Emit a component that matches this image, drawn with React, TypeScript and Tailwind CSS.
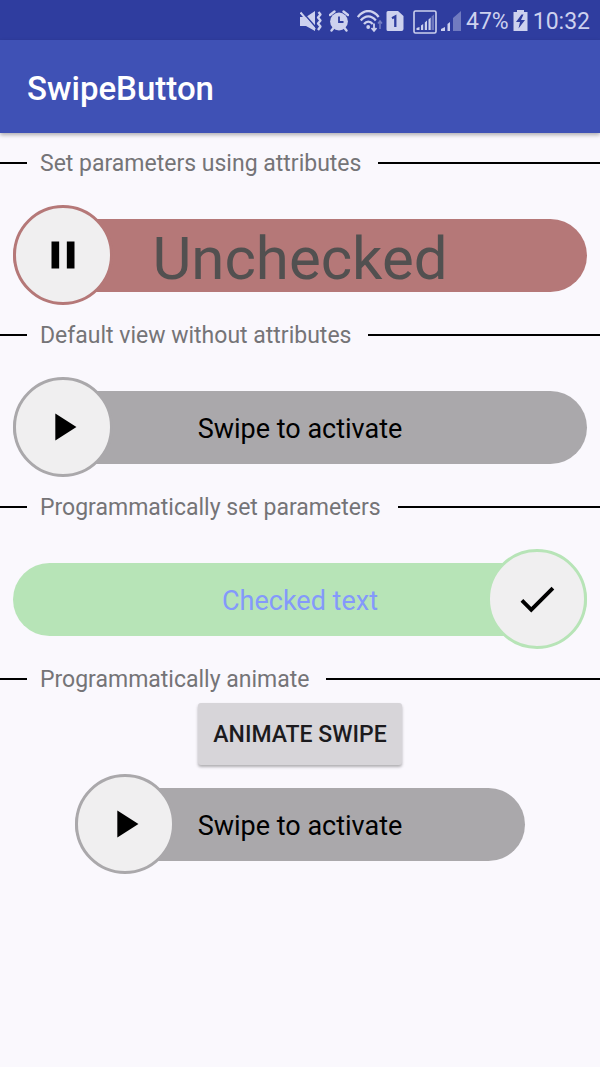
import { useState, type ReactNode } from "react";

const PAUSE = "M6 19h4V5H6v14zm8-14v14h4V5h-4z";
const PLAY = "M8 5v14l11-7z";
const CHECK = "M9 16.17 4.83 12l-1.42 1.41L9 19 21 7l-1.41-1.41z";

function StatusIcons() {
  return (
    <div className="flex items-center" aria-hidden="true">
      <svg className="mr-[7px] h-6 w-[22px]" viewBox="0 0 22 24" fill="#cdd1ee">
        <path d="M0 7h6l9-6v20l-9-5H0z" />
        <path d="M2 1.500l14 16" stroke="#2f3d9f" strokeWidth="1.500" />
        <path d="M.5 2.500l14.500 17" stroke="#cdd1ee" strokeWidth="2" />
        <path d="M18.500 2l2 2.500-2.500 3 2.500 3-2.500 3 2.500 3-2.500 3.500" fill="none" stroke="#cdd1ee" strokeWidth="2.300" strokeLinejoin="round" />
      </svg>
      <svg className="mr-2 h-6 w-5" viewBox="0 0 20 24" fill="#cdd1ee">
        <circle cx="10" cy="11.500" r="8.900" />
        <path d="M1 5 5.500 1.500M19 5 14.500 1.500M4.500 18l-2 2.500M15.500 18l2 2.500" stroke="#cdd1ee" strokeWidth="2.400" fill="none" strokeLinecap="round" />
        <path d="M10 6.500v5.500h4.500" fill="none" stroke="#2f3d9f" strokeWidth="1.800" />
      </svg>
      <svg className="mr-[3px] h-6 w-[26px]" viewBox="0 0 26 24" fill="none" stroke="#cdd1ee">
        <path d="M.800 7C7-1 15.500-1 21.700 7M3.800 10.500c4.500-5.500 10.500-5.500 15 0M7 14c2.700-3.300 6-3.300 8.700 0" strokeWidth="2.300" />
        <circle cx="11.200" cy="17" r="1.900" fill="#cdd1ee" stroke="none" />
        <path d="M17 13.500v7M14.500 18l2.500 2.800 2.500-2.800" strokeWidth="1.800" />
        <path d="M23 19v-8M21 13.500l2-2.500 2 2.500" strokeWidth="1.500" opacity=".45" />
      </svg>
      <svg className="mr-2 h-6 w-[18px]" viewBox="0 0 18 24">
        <path d="M2 1h10l5.500 5v13a2 2 0 0 1-2 2H2a1.500 1.500 0 0 1-1.500-1.500v-17A1.500 1.500 0 0 1 2 1z" fill="#cdd1ee" />
        <path d="M6 8.200 9.300 6.500V17" fill="none" stroke="#2f3d9f" strokeWidth="2.300" />
      </svg>
      <svg className="mr-1 h-6 w-[25px]" viewBox="0 0 25 24" fill="#cdd1ee">
        <rect x="2" y="1" width="22" height="22" rx="1.500" fill="none" stroke="#cdd1ee" strokeWidth="1.600" />
        <path d="M4.500 20v-2l3-1v3zM9 15.500l2.200-1.500v6H9zM12.800 12.500l2.200-2V20h-2.200zM16.500 9.500l2.200-2V20h-2.200z" />
        <path d="M19.500 6.500l2.500-2V20h-2.500z" opacity=".4" />
      </svg>
      <svg className="mr-[5px] h-6 w-5" viewBox="0 0 20 24" fill="#cdd1ee">
        <path d="M0 21v-2l4-2v4zM6.500 14l2.500-2v9H6.500z" />
        <path d="M12 8l8-7v20h-8z" opacity=".42" />
      </svg>
    </div>
  );
}

function SwipeButton({
  label,
  activeLabel,
  trackClass,
  ringClass,
  textClass,
  icon,
  defaultOn = false,
}: {
  label: string;
  activeLabel?: string;
  trackClass: string;
  ringClass: string;
  textClass: string;
  icon: string;
  defaultOn?: boolean;
}) {
  const [on, setOn] = useState(defaultOn);
  return (
    <button
      type="button"
      role="switch"
      aria-checked={on}
      onClick={() => setOn(!on)}
      className="grid w-full items-center"
    >
      <span className={`col-start-1 row-start-1 flex h-[73px] items-center justify-center rounded-full ${trackClass} ${textClass}`}>
        {on && activeLabel ? activeLabel : label}
      </span>
      <span
        className={`col-start-1 row-start-1 flex size-[100px] items-center justify-center rounded-full border-[3px] bg-[#f0eff0] ${ringClass} ${on ? "justify-self-end" : "justify-self-start"}`}
      >
        <svg viewBox="0 0 24 24" className="size-[46px]" fill="#000" aria-hidden="true">
          <path d={on ? CHECK : icon} />
        </svg>
      </span>
    </button>
  );
}

function Heading({ children }: { children: ReactNode }) {
  return (
    <div className="flex h-[30px] items-center">
      <span className="h-[2px] w-[27px] bg-black" />
      <h2 className="pt-[2px] pr-[17px] pl-[13px] text-[23px] leading-7 text-[#757477]">{children}</h2>
      <span className="h-[2px] flex-1 bg-black" />
    </div>
  );
}

export default function App() {
  return (
    <div className="min-h-screen bg-[#faf8fd] font-[Roboto,sans-serif]">
      <div className="flex h-10 items-center justify-end bg-[#2f3d9f] pt-1 pr-[10px] text-[23px] leading-8 text-[#cdd1ee]">
        <StatusIcons />
        <span>47%</span>
        <svg className="mr-[5px] ml-1 h-6 w-[15px]" viewBox="0 0 15 24" aria-hidden="true">
          <path d="M4 0h7v2h3.500v19H.5V2H4z" fill="#cdd1ee" />
          <path d="M8.500 4.500 3 12h4l-1.500 6.500L12 10H8l2.500-5.500z" fill="#2f3d9f" />
        </svg>
        <time>10:32</time>
      </div>
      <header className="relative flex h-[93px] items-center bg-[#3f51b5] px-[27px] pt-1 shadow-[0_2px_4px_rgba(0,0,0,0.3)]">
        <h1 className="text-[33px] leading-10 font-medium text-white">SwipeButton</h1>
      </header>
      <main className="flex flex-col pt-[15px]">
        <section>
          <Heading>Set parameters using attributes</Heading>
          <div className="px-[13px] pt-[27px] pb-[15px]">
            <SwipeButton
              label="Unchecked"
              activeLabel="Checked"
              trackClass="bg-[#b57878]"
              ringClass="border-[#b57878]"
              textClass="pt-[7px] text-[60px] leading-[66px] text-[#525050]"
              icon={PAUSE}
            />
          </div>
        </section>
        <section>
          <Heading>Default view without attributes</Heading>
          <div className="px-[13px] pt-[27px] pb-[15px]">
            <SwipeButton
              label="Swipe to activate"
              trackClass="bg-[#aaa8ab]"
              ringClass="border-[#aaa8ab]"
              textClass="pt-1 text-[27px] leading-8 text-black"
              icon={PLAY}
            />
          </div>
        </section>
        <section>
          <Heading>Programmatically set parameters</Heading>
          <div className="px-[13px] pt-[27px] pb-[15px]">
            <SwipeButton
              defaultOn
              label="Unchecked text"
              activeLabel="Checked text"
              trackClass="bg-[#b7e4b7]"
              ringClass="border-[#b7e4b7]"
              textClass="pt-1 text-[27px] leading-8 text-[#8499fb]"
              icon={PLAY}
            />
          </div>
        </section>
        <section>
          <Heading>Programmatically animate</Heading>
          <div className="flex flex-col items-center pt-[9px]">
            <button
              type="button"
              className="h-[62px] rounded-[3px] bg-[#d7d5d9] px-[15px] pt-[2px] text-[23px] leading-8 font-medium text-[#1c1b1e] shadow-[0_2px_3px_rgba(0,0,0,0.3)]"
            >
              ANIMATE SWIPE
            </button>
            <div className="w-3/4 pt-[9px]">
              <SwipeButton
                label="Swipe to activate"
                trackClass="bg-[#aaa8ab]"
                ringClass="border-[#aaa8ab]"
                textClass="pt-1 text-[27px] leading-8 text-black"
                icon={PLAY}
              />
            </div>
          </div>
        </section>
      </main>
    </div>
  );
}
